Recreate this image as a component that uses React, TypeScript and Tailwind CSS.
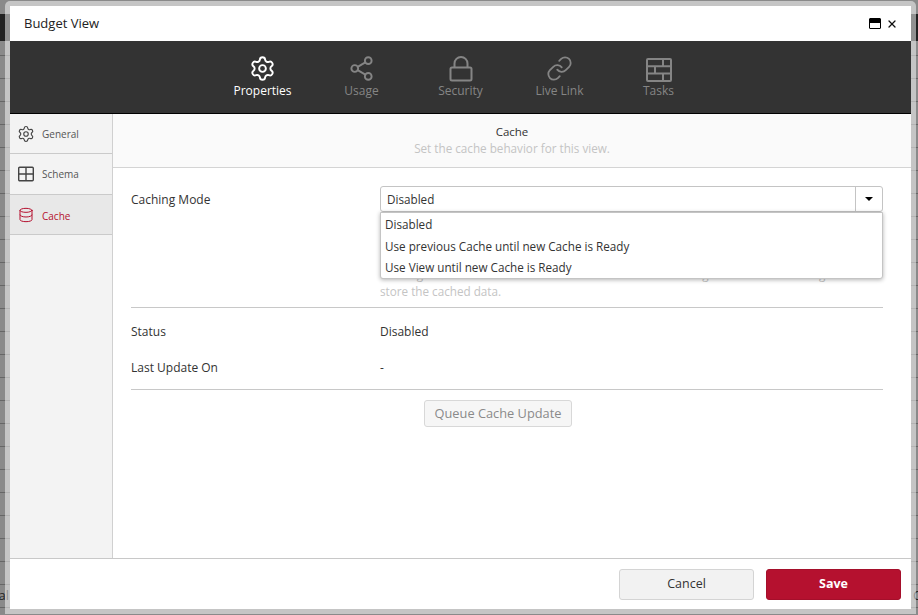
import { Database, Link, Settings, Share2, X } from "lucide-react";

const FONT = "font-['Open_Sans','Noto_Sans',sans-serif]";

function LockIcon() {
	return (
		<svg width="24" height="26" viewBox="0 0 24 26" fill="none" stroke="currentColor" strokeWidth="2">
			<rect x="1.5" y="11.5" width="21" height="13" rx="1.5" />
			<path d="M5.5 11.5V7.5a6.5 6.5 0 0 1 13 0v4" />
		</svg>
	);
}

function TasksIcon() {
	return (
		<svg width="26" height="24" viewBox="0 0 26 24" fill="none" stroke="currentColor" strokeWidth="2">
			<rect x="1" y="1" width="24" height="22" rx="1" />
			<path d="M1 8.3h24M1 15.6h24M17 1v7.3M9 8.3v7.3M17 15.6V23" />
		</svg>
	);
}

function GridIcon() {
	return (
		<svg width="16" height="16" viewBox="0 0 16 16" fill="none" stroke="currentColor" strokeWidth="1.4">
			<rect x="0.7" y="1.2" width="14.6" height="13.6" rx="1" />
			<path d="M0.7 8h14.6M8 1.2v13.6" />
		</svg>
	);
}

const tabs = [
	{ label: "Properties", icon: <Settings size={27} strokeWidth={1.7} />, active: true },
	{ label: "Usage", icon: <Share2 size={27} strokeWidth={1.7} /> },
	{ label: "Security", icon: <LockIcon /> },
	{ label: "Live Link", icon: <Link size={27} strokeWidth={1.6} /> },
	{ label: "Tasks", icon: <TasksIcon /> },
];

const options = ["Disabled", "Use previous Cache until new Cache is Ready", "Use View until new Cache is Ready"];

export default function App() {
	return (
		<div className={`relative h-[615px] w-[918px] overflow-hidden bg-[#8a8a8a] ${FONT}`}>
			{/* page behind the dialog */}
			<div className="h-[14px] bg-[#8a8a8a]" />
			<div className="h-[27px] bg-[#222222]" />
			<div className="h-[15px] border-b border-[#666666]" />
			{Array.from({ length: 25 }).map((_, i) => (
				<div key={i} className="flex h-[23px] items-center justify-between border-b border-[#666666] text-[13px] text-[#222222]">
					{i === 23 ? (
						<>
							<span className="w-[9px] overflow-hidden text-right" dir="rtl">al</span>
							<span className="w-[5px] overflow-hidden">C</span>
						</>
					) : null}
				</div>
			))}

			{/* dialog */}
			<div className="absolute left-[5px] top-px flex h-[613px] w-[911px] flex-col rounded-t-[5px] border-[5px] border-white/50 bg-white bg-clip-padding text-[#333333]">
				<div className="flex h-[35px] shrink-0 items-center justify-between pl-[14px] pr-[13px] text-[13px] font-medium text-[#222222]">
					<span>Budget View</span>
					<div className="flex items-center gap-[5px]">
						<div className="h-[11px] w-[12px] rounded-[1px] border border-black">
							<div className="h-[4px] bg-black" />
						</div>
						<X size={12} strokeWidth={2.6} className="text-[#111111]" />
					</div>
				</div>

				<div className="flex h-[73px] shrink-0 justify-center border-b border-black bg-[#333333] pt-[13px]">
					{tabs.map((t) => (
						<div
							key={t.label}
							className={`flex w-[99px] flex-col items-center text-[12px] ${t.active ? "font-medium text-white" : "text-[#858585]"}`}
						>
							<div className="flex h-[28px] items-end">{t.icon}</div>
							<span>{t.label}</span>
						</div>
					))}
				</div>

				<div className="flex min-h-0 flex-1">
					<div className="w-[103px] shrink-0 border-r border-[#d0d0d0] bg-[#f3f3f3] text-[10px]">
						<div className="flex h-[40px] items-center gap-[7px] border-b border-[#cacaca] pl-[7px] text-[#555555]">
							<Settings size={18} strokeWidth={1.5} className="text-[#444444]" />
							<span className="pt-[2px]">General</span>
						</div>
						<div className="flex h-[41px] items-center gap-[8px] border-b border-[#cacaca] pl-[8px] text-[#555555]">
							<span className="text-[#444444]"><GridIcon /></span>
							<span>Schema</span>
						</div>
						<div className="flex h-[40px] items-center gap-[8px] border-b border-[#cacaca] bg-[#e8e8e8] pl-[8px] text-[#b5112f]">
							<Database size={16} strokeWidth={1.5} />
							<span className="pt-[3px]">Cache</span>
						</div>
					</div>

					<div className="min-w-0 flex-1">
						<div className="flex h-[54px] flex-col items-center justify-center border-b border-[#d4d4d4] bg-[#fafafa] pb-[2px]">
							<span className="text-[11.5px] font-medium leading-[17px] text-[#333333]">Cache</span>
							<span className="text-[11.7px] leading-[16px] text-[#c4c4c4]">Set the cache behavior for this view.</span>
						</div>

						<div className="pl-[18px] pr-[28px] pt-[18px] text-[12px] text-[#333333]">
							<div className="flex border-b border-[#c8c8c8] pb-[7px]">
								<div className="w-[249px] shrink-0 pt-[5px] leading-[17px]">Caching Mode</div>
								<div className="relative min-w-0 flex-1 text-[11.7px]">
									<div className="flex h-[26px] items-stretch rounded-[3px] border border-[#c4c4c4]">
										<div className="flex-1 pl-[6px] leading-[24px]">Disabled</div>
										<div className="flex w-[27px] items-center justify-center border-l border-[#c4c4c4]">
											<div className="h-0 w-0 border-x-[4px] border-t-[4px] border-x-transparent border-t-black" />
										</div>
									</div>
									<div className="mt-[54px] leading-[17px] text-[#c4c4c4]">
										<p className="whitespace-nowrap">Caching will store the results of this view in the linked Storage Account as the Target to</p>
										<p>store the cached data.</p>
									</div>
									<div className="absolute inset-x-0 top-[26px] z-10 h-[67px] rounded-b-[3px] border border-[#c4c4c4] bg-white pl-[4px] pt-px shadow-[0_1px_4px_rgba(0,0,0,0.3)]">
										{options.map((o) => (
											<div key={o} className="h-[21.5px] leading-[21px]">{o}</div>
										))}
									</div>
								</div>
							</div>

							<div className="flex pt-[15px] leading-[17px]">
								<div className="w-[249px] shrink-0">Status</div>
								<div>Disabled</div>
							</div>
							<div className="flex border-b border-[#c8c8c8] pb-[13px] pt-[19px] leading-[17px]">
								<div className="w-[249px] shrink-0">Last Update On</div>
								<div>-</div>
							</div>
							<div className="flex pl-[293px] pt-[10px]">
								<div className="flex h-[27px] w-[148px] items-center justify-center rounded-[3px] border border-[#d8d8d8] bg-[#f6f6f6] text-[12.8px] font-medium text-[#8a8a8a]">
									Queue Cache Update
								</div>
							</div>
						</div>
					</div>
				</div>

				<div className="flex h-[51px] shrink-0 items-center justify-end gap-[12px] border-t border-[#c8c8c8] pr-[10px] text-[12.5px]">
					<div className="flex h-[31px] w-[135px] items-center justify-center rounded-[3px] border border-[#d4d4d4] bg-[#f2f2f2] font-medium text-[#333333]">
						Cancel
					</div>
					<div className="flex h-[31px] w-[135px] items-center justify-center rounded-[3px] border border-[#a50f2b] bg-[#b5112f] font-bold text-white">
						Save
					</div>
				</div>
			</div>
		</div>
	);
}
